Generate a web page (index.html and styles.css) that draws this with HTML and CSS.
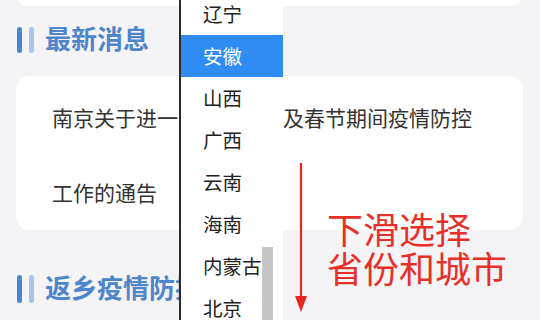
FILE: index.html
```html
<!DOCTYPE html>
<html lang="zh-CN">
<head>
<meta charset="utf-8">
<link rel="stylesheet" href="styles.css">
</head>
<body>
<div class="page">
  <div class="card card-top"></div>
  <div class="heading">
    <span class="bar bar-dark"></span><span class="bar bar-light"></span>
    <span class="heading-text">最新消息</span>
  </div>
  <div class="card news">
    <p class="news-text">南京关于进一步做好元旦及春节期间疫情防控工作的通告</p>
  </div>
  <div class="heading heading-2">
    <span class="bar bar-dark"></span><span class="bar bar-light"></span>
    <span class="heading-text">返乡疫情防控政策</span>
  </div>

  <ul class="dropdown">
    <li class="opt">辽宁</li>
    <li class="opt selected">安徽</li>
    <li class="opt">山西</li>
    <li class="opt">广西</li>
    <li class="opt">云南</li>
    <li class="opt">海南</li>
    <li class="opt">内蒙古</li>
    <li class="opt">北京</li>
    <li class="thumb"></li>
  </ul>

  <svg class="arrow" width="20" height="160" viewBox="0 0 20 160">
    <line x1="10" y1="0" x2="10" y2="140" stroke="#e8261f" stroke-width="2.2"/>
    <polygon points="4,133 16,133 10,149" fill="#e8261f"/>
  </svg>
  <div class="note">下滑选择<br>省份和城市</div>
</div>
</body>
</html>
```
FILE: styles.css
```css
html, body {
  margin: 0;
  padding: 0;
  background: #f4f4f6;
}
body {
  width: 540px;
  height: 320px;
  overflow: hidden;
  font-family: "Noto Sans CJK SC", "Noto Sans", sans-serif;
}
.page {
  position: relative;
  display: flow-root;
  padding: 0 17px 0 16px;
  height: 320px;
  box-sizing: border-box;
}
.card {
  background: #ffffff;
  border-radius: 14px;
}
.card-top {
  height: 60px;
  margin-top: -54px;
  border-radius: 12px;
}
.heading {
  display: flex;
  align-items: center;
  height: 26px;
  margin-top: 21px;
  margin-bottom: 23px;
  padding-left: 1px;
}
.heading-2 {
  margin-top: 45px;
  height: 28px;
}
.bar {
  width: 5px;
  align-self: stretch;
  border-radius: 3px;
}
.bar-dark {
  background: #4a86cf;
}
.bar-light {
  background: #a6c5ea;
  margin-left: 7px;
}
.heading-text {
  margin-left: 11px;
  font-size: 26px;
  font-weight: 700;
  line-height: 26px;
  color: #4f86cb;
  margin-top: -4px;
  white-space: nowrap;
}
.news {
  padding: 4px 36px 0 36px;
}
.news-text {
  margin: 0;
  font-size: 21px;
  line-height: 75px;
  color: #333333;
}
.dropdown {
  position: absolute;
  left: 179px;
  top: -7px;
  width: 102px;
  height: 340px;
  margin: 0;
  padding: 0;
  list-style: none;
  background: #ffffff;
  border-left: 2px solid #2b2b2b;
}
.opt {
  height: 42px;
  line-height: 42px;
  padding-left: 22px;
  font-size: 19.5px;
  color: #222222;
}
.opt.selected {
  background: #2e8cf2;
  color: #ffffff;
}
.thumb {
  position: absolute;
  left: 81px;
  top: 254px;
  width: 11px;
  height: 90px;
  background: #c6c6c6;
}
.arrow {
  position: absolute;
  left: 291px;
  top: 163px;
}
.note {
  position: absolute;
  left: 327px;
  top: 209px;
  font-size: 36px;
  line-height: 39px;
  color: #e8302a;
  white-space: nowrap;
}
```
